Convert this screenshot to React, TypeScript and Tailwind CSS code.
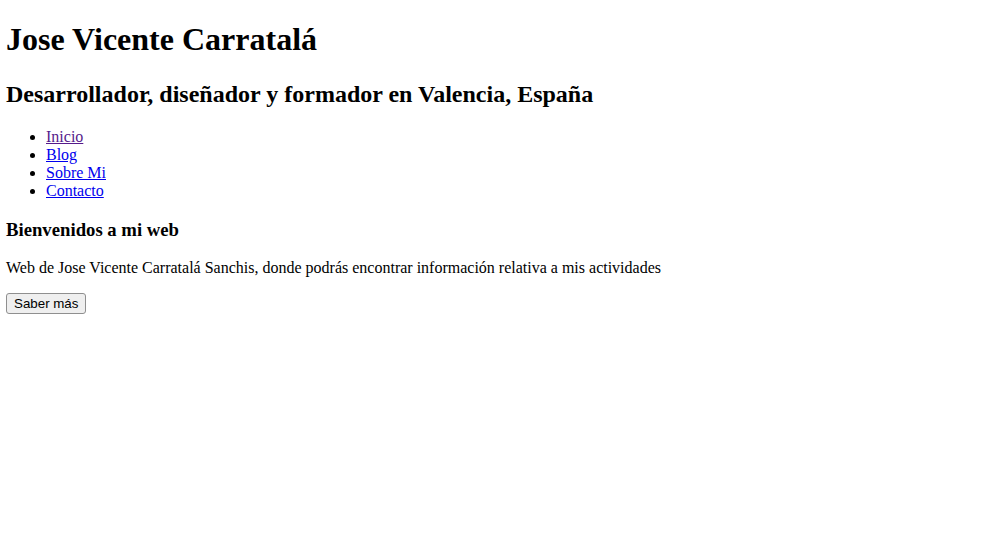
const links = [
  { label: "Inicio", visited: true },
  { label: "Blog", visited: false },
  { label: "Sobre Mi", visited: false },
  { label: "Contacto", visited: false },
];

export default function App() {
  return (
    <div className="min-h-screen bg-white">
      <div className="mx-[6px] pt-px font-['Liberation_Serif','Times_New_Roman',serif] text-base leading-[normal] text-black">
        <header>
          <h1 className="mt-[20.44px] mb-[19.44px] text-[32px] font-bold">
            Jose Vicente Carratalá
          </h1>
          <h2 className="mt-[19.44px] mb-[17.92px] text-2xl font-bold">
            Desarrollador, diseñador y formador en Valencia, España
          </h2>
          <nav>
            <ul className="mt-[17.92px] mb-4 list-disc pl-10">
              {links.map((link) => (
                <li key={link.label}>
                  <a
                    href="#"
                    className={[
                      "underline",
                      link.visited ? "text-[#551a8b]" : "text-[#0000ee]",
                    ].join(" ")}
                  >
                    {link.label}
                  </a>
                </li>
              ))}
            </ul>
          </nav>
        </header>
        <main>
          <h3 className="my-[18.72px] text-[18.72px] font-bold">
            Bienvenidos a mi web
          </h3>
          <p className="my-4">
            Web de Jose Vicente Carratalá Sanchis, donde podrás encontrar
            información relativa a mis actividades
          </p>
          <button className="rounded-[3px] border border-[#8f8f8f] bg-[#efefef] px-[7px] py-[2px] font-['Liberation_Sans',Arial,sans-serif] text-[13.33px] text-black">
            Saber más
          </button>
        </main>
      </div>
    </div>
  );
}
